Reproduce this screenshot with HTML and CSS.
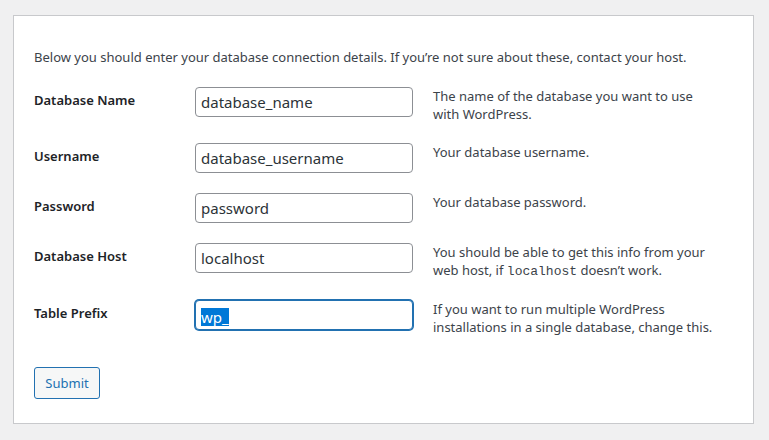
FILE: index.html
```html
<!DOCTYPE html>
<html lang="en">
<head>
<meta charset="utf-8">
<title>WordPress › Setup Configuration File</title>
<link rel="stylesheet" href="styles.css">
</head>
<body>
<form class="card" method="post" action="#">
  <p class="intro">Below you should enter your database connection details. If you’re not sure about these, contact your host.</p>
  <div class="form-table">
    <div class="row">
      <label class="label" for="dbname">Database Name</label>
      <div class="field"><input class="input" id="dbname" type="text" value="database_name"></div>
      <div class="desc">The name of the database you want to use with WordPress.</div>
    </div>
    <div class="row">
      <label class="label" for="uname">Username</label>
      <div class="field"><input class="input" id="uname" type="text" value="database_username"></div>
      <div class="desc">Your database username.</div>
    </div>
    <div class="row">
      <label class="label" for="pwd">Password</label>
      <div class="field"><input class="input" id="pwd" type="text" value="password"></div>
      <div class="desc">Your database password.</div>
    </div>
    <div class="row">
      <label class="label" for="dbhost">Database Host</label>
      <div class="field"><input class="input" id="dbhost" type="text" value="localhost"></div>
      <div class="desc">You should be able to get this info from your web host, if <code class="code">localhost</code> doesn’t work.</div>
    </div>
    <div class="row">
      <label class="label" for="prefix">Table Prefix</label>
      <div class="field"><div class="input input-focus" id="prefix"><span class="sel">wp_</span></div></div>
      <div class="desc">If you want to run multiple WordPress installations in a single database, change this.</div>
    </div>
  </div>
  <div class="actions"><button class="button" type="button">Submit</button></div>
</form>
</body>
</html>
```

FILE: styles.css
```css
html, body {
  margin: 0;
  padding: 0;
}
body {
  background: #f0f0f1;
  font-family: "Noto Sans", "Open Sans", sans-serif;
  font-size: 13px;
  color: #3c434a;
  padding: 15px 15px 16px 13px;
}
.card {
  display: block;
  background: #fff;
  border: 1px solid #c8c9cc;
  padding: 31px 20px 24px 20px;
  width: 699px;
}
.intro {
  margin: 0 0 10px;
  line-height: 20px;
}
.form-table {
  display: flex;
  flex-direction: column;
}
.row {
  display: flex;
  padding: 10px 0;
  align-items: flex-start;
}
.label {
  width: 161px;
  flex: none;
  font-weight: 600;
  color: #1d2327;
  line-height: 20px;
  padding-top: 3px;
}
.field {
  width: 218px;
  flex: none;
  margin-right: 20px;
}
.input {
  box-sizing: border-box;
  display: block;
  width: 218px;
  height: 30px;
  margin: 0;
  padding: 0 5px;
  border: 1px solid #8c8f94;
  border-radius: 4px;
  background: #fff;
  color: #2c3338;
  font-family: "Noto Sans", "Open Sans", sans-serif;
  font-size: 15px;
  line-height: 28px;
  outline: none;
}
.input-focus {
  border-color: #2271b1;
  box-shadow: 0 0 0 1px #2271b1;
}
.sel {
  background: #0078d7;
  color: #fff;
  display: inline-block;
  line-height: 18px;
  vertical-align: middle;
}
.desc {
  flex: 1;
  line-height: 18px;
  max-width: 282px;
}
.code {
  font-family: "Liberation Mono", "DejaVu Sans Mono", monospace;
  font-size: 13px;
  line-height: 16px;
}
.actions {
  padding-top: 21px;
}
.button {
  box-sizing: border-box;
  height: 32px;
  width: 66px;
  padding: 0;
  border: 1px solid #2271b1;
  border-radius: 3px;
  background: #f6f7f7;
  color: #2271b1;
  font-family: "Noto Sans", "Open Sans", sans-serif;
  font-size: 13px;
  cursor: pointer;
}
```
